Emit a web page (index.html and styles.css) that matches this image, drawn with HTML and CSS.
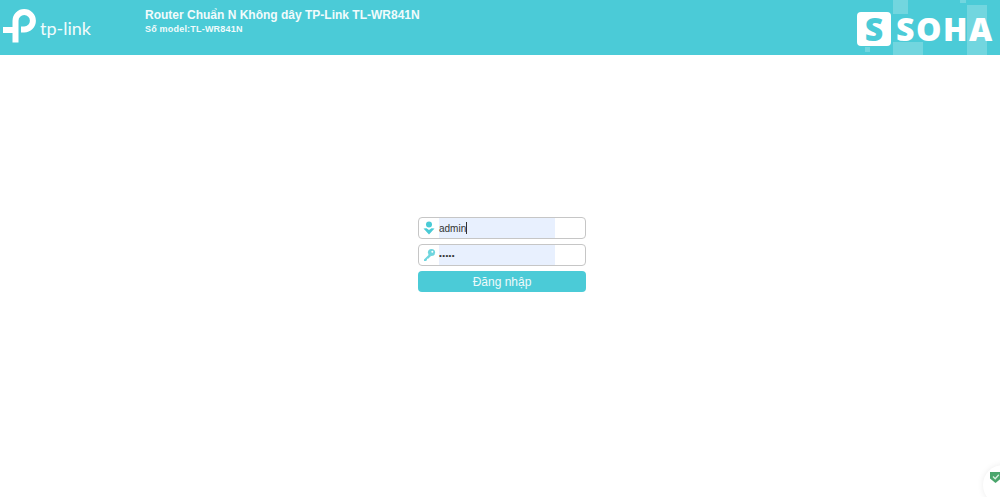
FILE: index.html
```html
<!DOCTYPE html>
<html lang="en">
<head>
    <meta charset="UTF-8">
    <meta name="viewport" content="width=device-width, initial-scale=1.0">
    <title>TP-Link</title>
    <link rel="stylesheet" href="styles.css">
</head>
<body>
    <div class="header">
        <div class="logo">
            <svg class="logo-mark" width="34" height="34" viewBox="0 0 34 34">
                <path d="M12.5 33.5V11.7a8.7 8.7 0 1 1 8.7 8.7H18" fill="none" stroke="#fff" stroke-width="6"/>
                <path d="M0 18h10v6H0z" fill="#fff"/>
            </svg>
            <span class="logo-text">tp-link</span>
        </div>
        <div class="title">
            <div class="product">Router Chuẩn N Không dây TP-Link TL-WR841N</div>
            <div class="model">Số model:TL-WR841N</div>
        </div>
        <div class="decor decor1"></div>
        <div class="decor decor2"></div>
        <div class="decor decor3"></div>
        <div class="decor decor4"></div>
        <div class="decor decor5"></div>
        <div class="soha">
            <span class="soha-s">S</span>
            <span class="soha-text">SOHA</span>
        </div>
    </div>

    <div class="main">
        <form class="login">
            <div class="field">
                <span class="field-icon">
                    <svg width="14" height="14" viewBox="0 0 14 14">
                        <circle cx="7" cy="3.6" r="3" fill="#4acbd6"/>
                        <path d="M1.5 7.5 L7 13.5 L12.5 7.5 L9.5 7.2 L7 9 L4.5 7.2z" fill="#4acbd6"/>
                    </svg>
                </span>
                <span class="field-value">admin<span class="caret"></span></span>
            </div>
            <div class="field">
                <span class="field-icon">
                    <svg width="14" height="14" viewBox="0 0 14 14">
                        <circle cx="9.5" cy="4.5" r="3.6" fill="#6fd5de"/>
                        <circle cx="10.3" cy="3.7" r="1" fill="#fff"/>
                        <path d="M7.5 6 L2 11.5 V13 H4 L5 12 V10.8 H6.2 L9 8z" fill="#6fd5de"/>
                    </svg>
                </span>
                <span class="field-value dots">•••••</span>
            </div>
            <button type="button" class="submit">Đăng nhập</button>
        </form>
    </div>

    <div class="badge">
        <svg width="11" height="11" viewBox="0 0 11 11">
            <path d="M0 0h11v6.5L5.5 11 0 6.5z" fill="#4aa56c"/>
            <path d="M3 4.5 L5.2 6.7 L8.8 2.8" fill="none" stroke="#d8efdf" stroke-width="1.3"/>
        </svg>
    </div>
</body>
</html>
```

FILE: styles.css
```css
body {
    font-family: 'Liberation Sans', Arial, sans-serif;
    background-color: #fff;
    margin: 0;
    padding: 0;
    color: #333;
    height: 497px;
    overflow: hidden;
}

.header {
    position: relative;
    display: flex;
    align-items: center;
    height: 55px;
    background-color: #4bcbd7;
    color: #f1fbfc;
    overflow: hidden;
}

.logo {
    display: flex;
    align-items: center;
    width: 145px;
    padding-left: 3px;
    padding-bottom: 3px;
    box-sizing: border-box;
}
.logo-mark {
    flex: none;
}
.logo-text {
    font-family: 'Lato', sans-serif;
    font-size: 18px;
    margin-left: 3px;
    padding-top: 3px;
}

.title {
    padding-bottom: 12px;
}
.product {
    font-size: 12px;
    font-weight: bold;
    line-height: 15px;
}
.model {
    font-size: 9px;
    font-weight: bold;
    line-height: 13px;
    letter-spacing: 0.2px;
}

.decor {
    position: absolute;
    background-color: rgba(255, 255, 255, 0.22);
}
.decor1 { left: 893px; top: 0; width: 15px; height: 14px; }
.decor2 { left: 893px; top: 42px; width: 30px; height: 13px; }
.decor3 { left: 967px; top: 5px; width: 20px; height: 50px; }
.decor4 { left: 865px; top: 47px; width: 5px; height: 5px; }
.decor5 { left: 960px; top: 0; width: 6px; height: 3px; }

.soha {
    position: absolute;
    left: 857px;
    top: 12px;
    display: flex;
    align-items: center;
    gap: 5px;
}
.soha-s {
    width: 34px;
    height: 34px;
    background-color: #fff;
    border-radius: 4px;
    color: #4bcbd7;
    font-family: 'Open Sans', sans-serif;
    font-size: 32px;
    font-weight: 800;
    line-height: 34px;
    text-align: center;
}
.soha-text {
    color: #fff;
    font-family: 'Open Sans', sans-serif;
    font-size: 32px;
    font-weight: 800;
    line-height: 34px;
    letter-spacing: 1.5px;
}

.main {
    display: flex;
    justify-content: center;
    padding-top: 162px;
}

.login {
    display: flex;
    flex-direction: column;
    width: 168px;
    margin-left: 4px;
}

.field {
    display: flex;
    box-sizing: border-box;
    height: 22px;
    margin-bottom: 5px;
    border: 1px solid #c6c6c6;
    border-radius: 4px;
    overflow: hidden;
}
.field-icon {
    display: flex;
    align-items: center;
    justify-content: center;
    width: 20px;
    flex: none;
}
.field-value {
    display: flex;
    align-items: center;
    width: 116px;
    background-color: #e8f0fe;
    font-size: 10px;
    color: #333;
}
.dots {
    font-size: 8px;
    letter-spacing: 0.4px;
}
.caret {
    width: 1px;
    height: 12px;
    background-color: #333;
}

.submit {
    height: 21px;
    padding: 0;
    border: none;
    border-radius: 4px;
    background-color: #4bcbd7;
    color: #eefafb;
    font-family: 'Liberation Sans', Arial, sans-serif;
    font-size: 12px;
    cursor: pointer;
}

.badge {
    position: absolute;
    left: 983px;
    top: 465px;
    width: 40px;
    height: 40px;
    border-radius: 50%;
    box-shadow: 0 0 6px rgba(0, 0, 0, 0.08);
    background-color: #fff;
}
.badge svg {
    position: absolute;
    left: 7px;
    top: 7px;
}
```
